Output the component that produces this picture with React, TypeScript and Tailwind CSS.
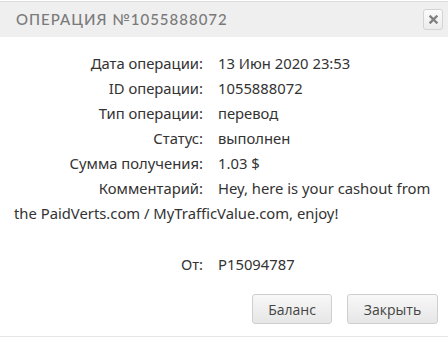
import React from "react";

const rows: [string, string][] = [
  ["Дата операции:", "13 Июн 2020 23:53"],
  ["ID операции:", "1055888072"],
  ["Тип операции:", "перевод"],
  ["Статус:", "выполнен"],
  ["Сумма получения:", "1.03 $"],
];

function Label({ children }: { children: React.ReactNode }) {
  return (
    <span className="inline-block w-[189px] text-right mr-[15px]">{children}</span>
  );
}

export default function App() {
  return (
    <div className="w-[448px] h-[337px] bg-white overflow-hidden flex flex-col border-b border-[#e6e6e6]">
      <div className="h-[36px] mt-[1px] border-t border-[#dcdcdc] bg-[#efefef] flex items-center justify-between pl-[16px] pr-[5px]">
        <span
          className="text-[15px] text-[#7a7a7a] tracking-[1px] font-medium"
          style={{ fontFamily: 'Lato, sans-serif' }}
        >
          ОПЕРАЦИЯ №1055888072
        </span>
        <button className="w-[20px] h-[21px] rounded-[3px] border border-[#d3d3d3] bg-gradient-to-b from-[#fbfbfb] to-[#ececec] flex items-center justify-center">
          <svg width="9" height="9" viewBox="0 0 9 9">
            <path d="M1.5 1.5 L7.5 7.5 M7.5 1.5 L1.5 7.5" stroke="#808080" strokeWidth="2.4" strokeLinecap="square" />
          </svg>
        </button>
      </div>
      <div
        className="px-[14px] pt-[14px] text-[14.8px] leading-[25px] text-[#333]"
        style={{ fontFamily: '"Noto Sans", sans-serif' }}
      >
        {rows.map(([l, v]) => (
          <div key={l}>
            <Label>{l}</Label>
            {v}
          </div>
        ))}
        <div>
          <Label>Комментарий:</Label>
          Hey, here is your cashout from the PaidVerts.com / MyTrafficValue.com, enjoy!
        </div>
        <div className="h-[26px]" />
        <div>
          <Label>От:</Label>
          P15094787
        </div>
      </div>
      <div
        className="flex justify-end gap-[15px] pr-[10px] mt-[17px]"
        style={{ fontFamily: '"Open Sans", sans-serif' }}
      >
        <button className="w-[80px] h-[30px] rounded-[3px] border border-[#cfcfcf] bg-gradient-to-b from-[#f8f8f8] to-[#e6e6e6] text-[14px] text-[#444]">
          Баланс
        </button>
        <button className="w-[91px] h-[30px] rounded-[3px] border border-[#cfcfcf] bg-gradient-to-b from-[#f8f8f8] to-[#e6e6e6] text-[14px] text-[#444]">
          Закрыть
        </button>
      </div>
    </div>
  );
}
